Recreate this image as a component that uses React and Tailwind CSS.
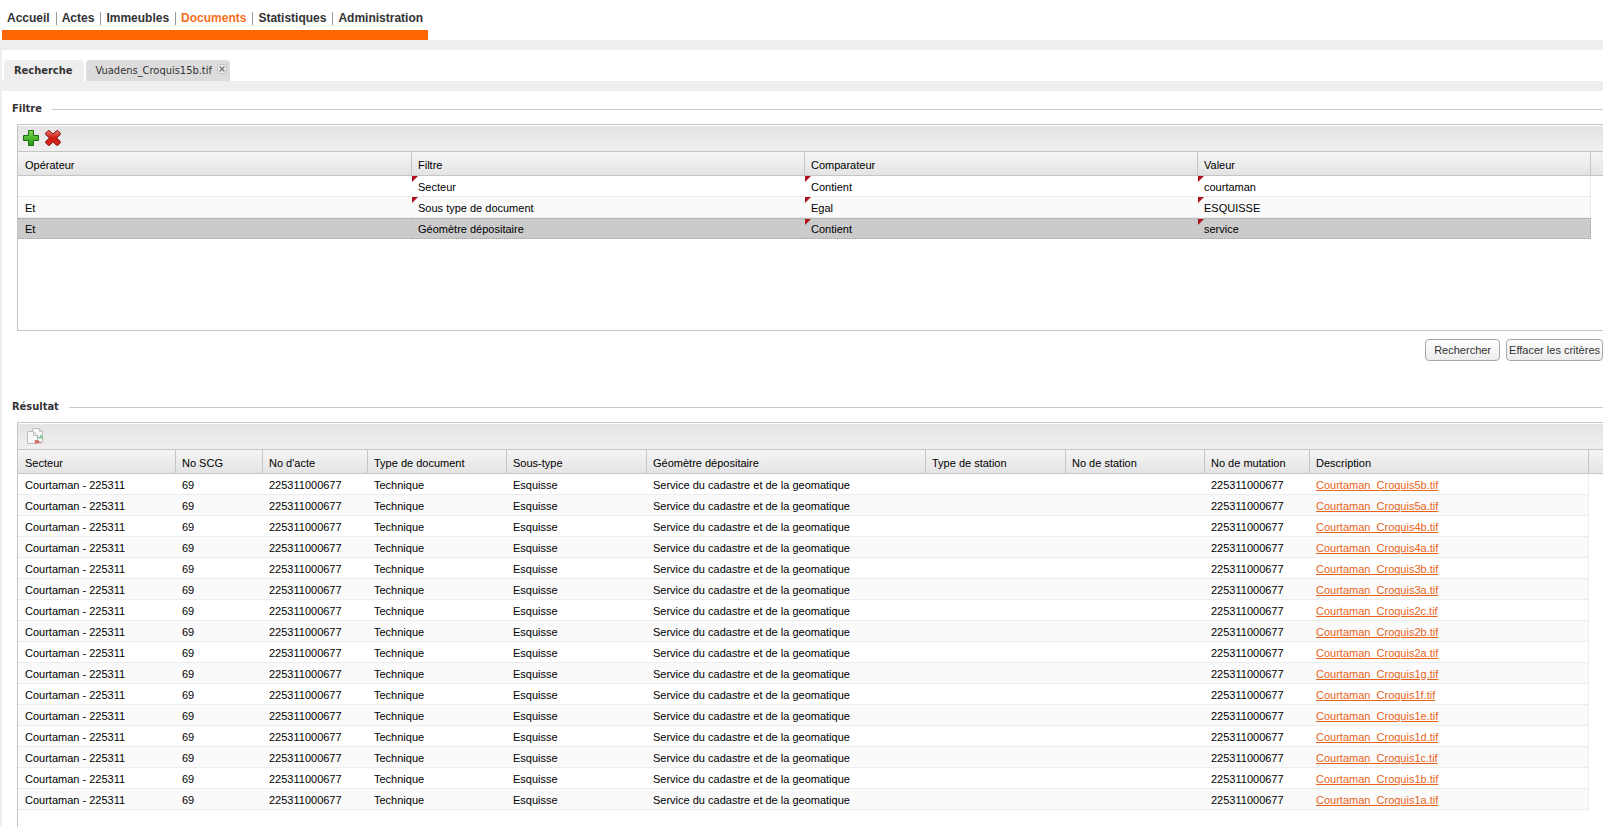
import React, { useState } from "react";

const NAV = ["Accueil", "Actes", "Immeubles", "Documents", "Statistiques", "Administration"];

const FILTER_COLUMNS = [
    { label: "Opérateur", width: "w-[394px]" },
    { label: "Filtre", width: "w-[393px]" },
    { label: "Comparateur", width: "w-[393px]" },
    { label: "Valeur", width: "w-[393px]" },
];

// dirty: indexes of the cells that were edited
const FILTER_ROWS = [
    { cells: ["", "Secteur", "Contient", "courtaman"], dirty: [1, 2, 3] },
    { cells: ["Et", "Sous type de document", "Egal", "ESQUISSE"], dirty: [1, 2, 3] },
    { cells: ["Et", "Géomètre dépositaire", "Contient", "service"], dirty: [2, 3] },
];

const RESULT_COLUMNS = [
    { label: "Secteur", width: "w-[158px]" },
    { label: "No SCG", width: "w-[87px]" },
    { label: "No d'acte", width: "w-[105px]" },
    { label: "Type de document", width: "w-[139px]" },
    { label: "Sous-type", width: "w-[140px]" },
    { label: "Géomètre dépositaire", width: "w-[279px]" },
    { label: "Type de station", width: "w-[140px]" },
    { label: "No de station", width: "w-[139px]" },
    { label: "No de mutation", width: "w-[105px]" },
    { label: "Description", width: "w-[279px]" },
];

const SKETCHES = ["5b", "5a", "4b", "4a", "3b", "3a", "2c", "2b", "2a", "1g", "1f", "1e", "1d", "1c", "1b", "1a"];

const RESULT_ROWS = SKETCHES.map((id) => [
    "Courtaman - 225311",
    "69",
    "225311000677",
    "Technique",
    "Esquisse",
    "Service du cadastre et de la geomatique",
    "",
    "",
    "225311000677",
    <a href="#" className="text-[#e8641b] underline">{`Courtaman_Croquis${id}.tif`}</a>,
]);

function AddIcon() {
    return (
        <svg width="16" height="16" viewBox="0 0 16 16" aria-hidden="true">
            <defs>
                <linearGradient id="add" x1="0" y1="0" x2="0" y2="1">
                    <stop offset="0" stopColor="#7ed957" />
                    <stop offset="1" stopColor="#1f9c0c" />
                </linearGradient>
            </defs>
            <path d="M5.5 .5h5v5h5v5h-5v5h-5v-5h-5v-5h5z" fill="url(#add)" stroke="#1f6b14" strokeLinejoin="round" />
        </svg>
    );
}

function RemoveIcon() {
    return (
        <svg width="16" height="16" viewBox="0 0 16 16" aria-hidden="true">
            <defs>
                <linearGradient id="remove" x1="0" y1="0" x2="0" y2="1">
                    <stop offset="0" stopColor="#e8776c" />
                    <stop offset="0.5" stopColor="#d01c14" />
                    <stop offset="1" stopColor="#d8281e" />
                </linearGradient>
            </defs>
            <path
                d="M3.2 .6Q4 .4 4.800 1L8 4.200 11.200 1Q12 .4 12.800 .6L15.400 3.200Q15.600 4 15 4.800L11.600 8 15 11.200Q15.600 12 15.400 12.800L12.800 15.400Q12 15.600 11.200 15L8 11.800 4.800 15Q4 15.600 3.200 15.400L.6 12.800Q.4 12 1 11.200L4.400 8 1 4.800Q.4 4 .6 3.200z"
                fill="url(#remove)"
                stroke="#7d1410"
                strokeLinejoin="round"
            />
        </svg>
    );
}

function ExportIcon() {
    return (
        <svg width="16" height="16" viewBox="0 0 16 16" fill="#f8f8f8" stroke="#bdbdbd" aria-hidden="true">
            <path d="M5.500 3V.5h7l3 3v11h-5" />
            <path d="M12.500 .5v3h3" fill="none" />
            <path d="M.5 3.500h6l4 4v8H.5z" />
            <path d="M6.500 3.500v4h4" fill="none" />
            <path d="M10.500 9.500h3.500V8l2 2v2" fill="none" stroke="#7fc08a" strokeWidth="1.500" />
            <path d="M8.500 12v3.500M9 14.500h5M9 13h3" fill="none" stroke="#cf6e62" strokeWidth="1.500" />
        </svg>
    );
}

function Grid({ name, columns, rows, selected, dirty }) {
    return (
        <table aria-label={name} className="w-full table-fixed border-separate border-spacing-0 text-[11px] leading-[13px] text-black">
            <colgroup>
                {columns.map((c) => (
                    <col key={c.label} className={c.width} />
                ))}
                <col />
            </colgroup>
            <thead>
                <tr className="h-[24px] bg-linear-to-b from-[#f5f5f5] to-[#e3e3e3]">
                    {columns.map((c) => (
                        <th
                            key={c.label}
                            scope="col"
                            className="truncate border-r border-b border-[#c5c5c5] px-[6px] pt-[3px] text-left font-normal first:pl-[7px]"
                        >
                            {c.label}
                        </th>
                    ))}
                    <td className="border-b border-[#c5c5c5]" />
                </tr>
            </thead>
            <tbody>
                {rows.map((cells, r) => {
                    const tone =
                        r === selected
                            ? "bg-[#cbcbcb] border-y border-dotted border-[#a3a3a3]"
                            : r % 2
                              ? "bg-[#fafafa] border-b border-[#ededed]"
                              : "border-b border-[#ededed]";
                    return (
                        <tr key={r} className="h-[21px]">
                            {cells.map((cell, i) => (
                                <td
                                    key={i}
                                    className={`relative truncate px-[6px] pt-[2px] first:pl-[7px] last-of-type:border-r ${tone}`}
                                >
                                    {dirty?.[r].includes(i) && (
                                        <span className="absolute top-0 left-0 h-[6px] w-[6px] bg-[#b0101a] [clip-path:polygon(0_0,100%_0,0_100%)]" />
                                    )}
                                    {cell}
                                </td>
                            ))}
                            <th aria-hidden="true" />
                        </tr>
                    );
                })}
            </tbody>
        </table>
    );
}

function Toolbar({ children }) {
    return (
        <div className="flex h-[27px] items-center gap-[6px] border-t border-b border-t-white border-b-[#c5c5c5] bg-linear-to-b from-[#e4e4e4] to-[#efefef] px-[5px] pb-[2px]">
            {children}
        </div>
    );
}

function SectionTitle({ children }) {
    return (
        <div className="flex items-center gap-[10px] pl-[10px]">
            <h2 className="font-['DejaVu_Sans_Condensed','Open_Sans',sans-serif] text-[11px] leading-[16px] font-bold text-[#333]">
                {children}
            </h2>
            <span className="h-px flex-1 bg-[#c9c9c9]" />
        </div>
    );
}

function PushButton({ children }) {
    return (
        <button
            type="button"
            className="h-[22px] min-w-[75px] rounded-[4px] border border-[#a3a9ab] bg-linear-to-b from-white to-[#ececec] px-[2px] text-[11px] text-[#333]"
        >
            {children}
        </button>
    );
}

export default function App() {
    const [selected] = useState(2);

    return (
        <div className="flex min-h-screen flex-col overflow-x-hidden bg-white font-['Liberation_Sans',Arial,sans-serif]">
            <header className="px-[2px]">
                <nav className="flex h-[40px] w-fit items-center border-b-[10px] border-[#ff6600] pt-[6px] pl-[5px]">
                    {NAV.map((item) => (
                        <a
                            key={item}
                            href="#"
                            className={`mr-[5px] border-[#999] pr-[6px] text-[12px] leading-[13px] font-bold not-last:border-r last:mr-0 last:pr-[5px] ${
                                item === "Documents" ? "text-[#f36f21]" : "text-[#333]"
                            }`}
                        >
                            {item}
                        </a>
                    ))}
                </nav>
            </header>

            <div className="flex flex-1 flex-col border-t-[10px] border-l-2 border-[#eee]">
                <div
                    role="tablist"
                    className="flex gap-[2px] border-b-[10px] border-[#eee] pt-[10px] pl-[2px] font-['DejaVu_Sans_Condensed','Open_Sans',sans-serif] text-[11px] text-[#333]"
                >
                    <button
                        type="button"
                        role="tab"
                        aria-selected="true"
                        className="h-[21px] rounded-t-[4px] bg-[#eee] pt-[2px] pr-[12px] pl-[10px] font-bold"
                    >
                        Recherche
                    </button>
                    <div className="flex h-[21px] rounded-t-[4px] bg-[#dcdcdc] pr-[3px] pl-[9px]">
                        <button type="button" role="tab" aria-selected="false" className="pt-[2px]">
                            Vuadens_Croquis15b.tif
                        </button>
                        <button
                            type="button"
                            aria-label="Fermer"
                            className="mt-[4px] ml-[5px] flex h-[10px] w-[10px] items-center justify-center rounded-[2px] border border-[#c4c4c4] bg-[#ececec]"
                        >
                            <svg width="6" height="6" viewBox="0 0 6 6" stroke="#808080" strokeWidth="1.500" aria-hidden="true">
                                <path d="M.5 .5 5.500 5.500M5.500 .5 .5 5.500" />
                            </svg>
                        </button>
                    </div>
                </div>

                <main className="flex flex-1 flex-col">
                    <section className="pt-[10px]">
                        <SectionTitle>Filtre</SectionTitle>
                        <div className="mt-[7px] ml-[15px] h-[207px] border-y border-l border-[#c5c5c5]">
                            <Toolbar>
                                <button type="button" aria-label="Ajouter"><AddIcon /></button>
                                <button type="button" aria-label="Supprimer"><RemoveIcon /></button>
                            </Toolbar>
                            <Grid
                                name="Filtre"
                                columns={FILTER_COLUMNS}
                                rows={FILTER_ROWS.map((r) => r.cells)}
                                dirty={FILTER_ROWS.map((r) => r.dirty)}
                                selected={selected}
                            />
                        </div>
                        <div className="flex justify-end gap-[6px] pt-[8px]">
                            <PushButton>Rechercher</PushButton>
                            <PushButton>Effacer les critères</PushButton>
                        </div>
                    </section>

                    <section className="flex flex-1 flex-col pt-[38px]">
                        <SectionTitle>Résultat</SectionTitle>
                        <div className="mt-[7px] ml-[15px] flex-1 border-t border-l border-[#c5c5c5]">
                            <Toolbar>
                                <button type="button" aria-label="Exporter" className="ml-[4px]"><ExportIcon /></button>
                            </Toolbar>
                            <Grid name="Résultat" columns={RESULT_COLUMNS} rows={RESULT_ROWS} />
                        </div>
                    </section>
                </main>
            </div>
        </div>
    );
}
